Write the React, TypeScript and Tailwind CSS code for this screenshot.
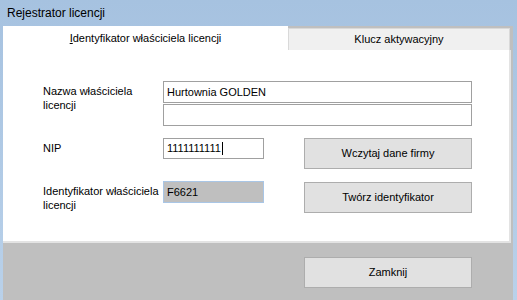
import React from "react";

const font = { fontFamily: '"Liberation Sans", Arial, sans-serif' };

function Label({ lines }: { lines: string[] }) {
  return (
    <div className="w-[120px] shrink-0 pt-[3px] text-[11px] leading-[14px] text-black">
      {lines.map((l) => (
        <div key={l}>{l}</div>
      ))}
    </div>
  );
}

function Button({ children, className = "" }: { children: React.ReactNode; className?: string }) {
  return (
    <button
      type="button"
      className={[
        "flex h-[31px] w-[168px] items-center justify-center border border-[#adadad] bg-[#e1e1e1] text-[11px] text-black",
        className,
      ].join(" ")}
    >
      {children}
    </button>
  );
}

export default function App() {
  return (
    <div className="flex h-[300px] w-[517px] flex-col bg-gradient-to-b from-[#a6c2e0] to-[#b9d1ea] text-black" style={font}>
      {/* title bar */}
      <div className="h-[26px] shrink-0 pl-[7px] pt-[6px] text-[12px] leading-[14px]">Rejestrator licencji</div>

      {/* client area */}
      <div className="ml-[3px] mr-[4px] flex flex-1 flex-col bg-[#bfbfbf]">
        {/* tab strip */}
        <div className="flex h-[24px] shrink-0">
          <div className="flex h-full w-[285px] items-center justify-center bg-white text-[11px]">
            <span>
              <span className="underline">I</span>dentyfikator właściciela licencji
            </span>
          </div>
          <div className="mt-[2px] flex h-[22px] w-[222px] items-center justify-center border border-b-0 border-[#d9d9d9] bg-[#f0f0f0] text-[11px]">
            Klucz aktywacyjny
          </div>
        </div>

        {/* tab page */}
        <div className="flex h-[193px] w-[508px] shrink-0 flex-col border-r-[2px] border-b-[2px] border-[#e3e3e3] bg-white pl-[40px] pt-[31px]">
          <div className="flex">
            <Label lines={["Nazwa właściciela", "licencji"]} />
            <div className="flex flex-col gap-px">
              <div className="flex h-[22px] w-[309px] items-center border border-[#a0a0a0] px-[3px] text-[11px]">
                Hurtownia GOLDEN
              </div>
              <div className="h-[22px] w-[309px] border border-[#a0a0a0]" />
            </div>
          </div>

          <div className="mt-[12px] flex">
            <Label lines={["NIP"]} />
            <div className="flex h-[21px] w-[101px] items-center border border-[#a0a0a0] px-[3px] text-[11px]">
              1111111111
              <span className="ml-px inline-block h-[13px] w-px bg-black" />
            </div>
            <Button className="ml-[40px]">Wczytaj dane firmy</Button>
          </div>

          <div className="mt-[12px] flex">
            <Label lines={["Identyfikator właściciela", "licencji"]} />
            <div className="flex h-[22px] w-[101px] items-center border border-[#a9c6e6] bg-[#bfbfbf] px-[3px] text-[11px]">
              F6621
            </div>
            <Button className="ml-[40px] mt-px">Twórz identyfikator</Button>
          </div>
        </div>

        {/* bottom bar */}
        <div className="flex flex-1 pl-[301px] pt-[14px]">
          <Button className="h-[30px]">Zamknij</Button>
        </div>
      </div>
    </div>
  );
}
